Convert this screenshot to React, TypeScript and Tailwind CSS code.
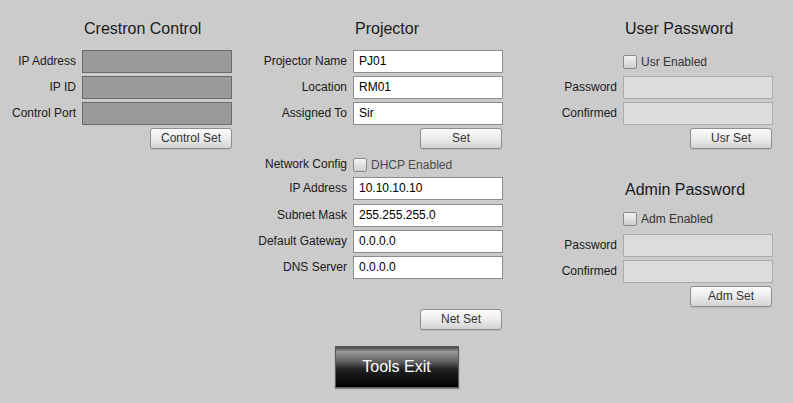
import React from "react";

const font = { fontFamily: '"Liberation Sans", Arial, sans-serif' };

function Label({ w, children }: { w: string; children: React.ReactNode }) {
  return (
    <div className={`${w} shrink-0 text-right text-[12px] leading-[23px] text-[#1a1a1a] whitespace-nowrap`}>
      {children}
    </div>
  );
}

function Field({ kind, value }: { kind: "dark" | "white" | "light"; value?: string }) {
  const cls =
    kind === "dark"
      ? "bg-[#9a9a9a] border-[#6a6a6a]"
      : kind === "white"
      ? "bg-white border-[#8c8c8c]"
      : "bg-[#dcdcdc] border-[#ababab]";
  return (
    <div
      className={`w-[150px] h-[23px] shrink-0 border ${cls} pl-[5px] text-[12px] leading-[21px] text-black whitespace-nowrap`}
    >
      {value}
    </div>
  );
}

function Btn({ children }: { children: React.ReactNode }) {
  return (
    <div className="w-[82px] h-[21px] rounded-[3px] border border-[#8e8e8e] bg-gradient-to-b from-[#fbfbfb] via-[#ececec] to-[#d2d2d2] text-center text-[12px] leading-[19px] text-[#333] shadow-[0_1px_0_#b8b8b8]">
      {children}
    </div>
  );
}

function Check({ label, dim }: { label: string; dim?: boolean }) {
  return (
    <div className="flex items-center h-[16px]">
      <div className="w-[14px] h-[14px] rounded-[2px] border border-[#8a8a8a] bg-gradient-to-b from-[#f2f2f2] to-[#cfcfcf]" />
      <span className={`ml-[4px] text-[12px] ${dim ? "text-[#4a4a4a]" : "text-[#333]"}`}>{label}</span>
    </div>
  );
}

function Row({
  lw,
  label,
  kind,
  value,
  mt,
}: {
  lw: string;
  label: string;
  kind: "dark" | "white" | "light";
  value?: string;
  mt: string;
}) {
  return (
    <div className={`flex gap-[6px] ${mt}`}>
      <Label w={lw}>{label}</Label>
      <Field kind={kind} value={value} />
    </div>
  );
}

function Title({ children, mt }: { children: React.ReactNode; mt?: string }) {
  return (
    <div className={`h-[20px] ${mt ?? ""} pl-[2px] text-[16px] leading-[20px] text-[#1a1a1a] whitespace-nowrap`}>
      {children}
    </div>
  );
}

export default function App() {
  return (
    <div style={font} className="w-[793px] h-[403px] bg-[#cbcbcb] overflow-hidden flex flex-col">
      <div className="flex items-start pt-[19px]">
        {/* Crestron Control */}
        <div className="flex flex-col w-[232px]">
          <div className="flex gap-[6px]">
            <div className="w-[76px]" />
            <Title>Crestron Control</Title>
          </div>
          <Row lw="w-[76px]" label="IP Address" kind="dark" mt="mt-[11px]" />
          <Row lw="w-[76px]" label="IP ID" kind="dark" mt="mt-[3px]" />
          <Row lw="w-[76px]" label="Control Port" kind="dark" mt="mt-[3px]" />
          <div className="flex justify-end mt-[3px]">
            <Btn>Control Set</Btn>
          </div>
        </div>

        {/* Projector */}
        <div className="flex flex-col w-[251px] ml-[20px]">
          <div className="flex gap-[6px]">
            <div className="w-[95px]" />
            <Title>Projector</Title>
          </div>
          <Row lw="w-[95px]" label="Projector Name" kind="white" value="PJ01" mt="mt-[11px]" />
          <Row lw="w-[95px]" label="Location" kind="white" value="RM01" mt="mt-[3px]" />
          <Row lw="w-[95px]" label="Assigned To" kind="white" value="Sir" mt="mt-[3px]" />
          <div className="flex justify-end mt-[3px] pr-px">
            <Btn>Set</Btn>
          </div>
          <div className="flex gap-[6px] mt-[4px] h-[23px] items-center">
            <Label w="w-[95px]">Network Config</Label>
            <Check label="DHCP Enabled" dim />
          </div>
          <Row lw="w-[95px]" label="IP Address" kind="white" value="10.10.10.10" mt="mt-[1px]" />
          <Row lw="w-[95px]" label="Subnet Mask" kind="white" value="255.255.255.0" mt="mt-[4px]" />
          <Row lw="w-[95px]" label="Default Gateway" kind="white" value="0.0.0.0" mt="mt-[3px]" />
          <Row lw="w-[95px]" label="DNS Server" kind="white" value="0.0.0.0" mt="mt-[3px]" />
          <div className="flex justify-end mt-[30px] pr-px">
            <Btn>Net Set</Btn>
          </div>
        </div>

        {/* Passwords */}
        <div className="flex flex-col w-[220px] ml-[50px]">
          <div className="flex gap-[6px]">
            <div className="w-[64px]" />
            <Title>User Password</Title>
          </div>
          <div className="flex gap-[6px] mt-[15px]">
            <div className="w-[64px]" />
            <Check label="Usr Enabled" />
          </div>
          <Row lw="w-[64px]" label="Password" kind="light" mt="mt-[6px]" />
          <Row lw="w-[64px]" label="Confirmed" kind="light" mt="mt-[3px]" />
          <div className="flex justify-end mt-[3px] pr-px">
            <Btn>Usr Set</Btn>
          </div>

          <div className="flex gap-[6px] mt-[31px]">
            <div className="w-[64px]" />
            <Title>Admin Password</Title>
          </div>
          <div className="flex gap-[6px] mt-[11px]">
            <div className="w-[64px]" />
            <Check label="Adm Enabled" />
          </div>
          <Row lw="w-[64px]" label="Password" kind="light" mt="mt-[7px]" />
          <Row lw="w-[64px]" label="Confirmed" kind="light" mt="mt-[3px]" />
          <div className="flex justify-end mt-[3px] pr-px">
            <Btn>Adm Set</Btn>
          </div>
        </div>
      </div>

      <div className="flex justify-center mt-[16px]">
        <div className="w-[124px] h-[42px] border border-[#5a5a5a] bg-[linear-gradient(to_bottom,#474747_0%,#9a9a9a_12%,#5c5c5c_38%,#222_55%,#000_100%)] text-center text-white text-[16px] leading-[40px] shadow-[0_1px_1px_#888]">
          Tools Exit
        </div>
      </div>
    </div>
  );
}
